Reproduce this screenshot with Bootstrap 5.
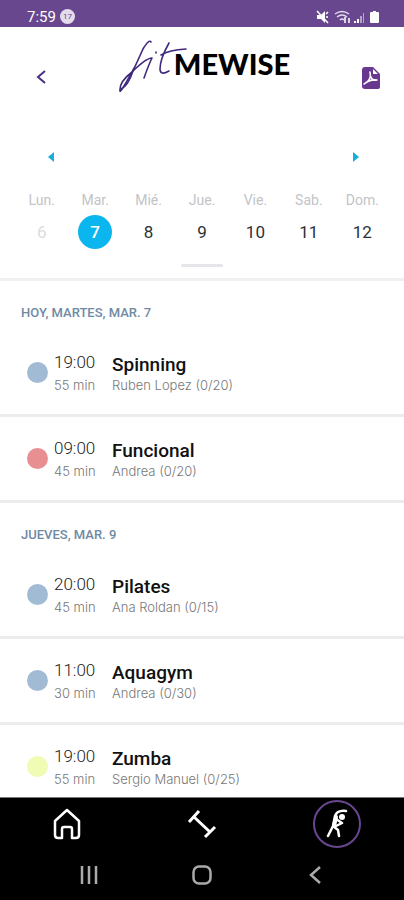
<!DOCTYPE html>
<html lang="es">
<head>
<meta charset="utf-8">
<meta name="viewport" content="width=device-width, initial-scale=1">
<title>Fitmewise</title>
<link href="https://cdn.jsdelivr.net/npm/bootstrap@5.3.0/dist/css/bootstrap.min.css" rel="stylesheet">
<style>
  body { font-family: Roboto, "Open Sans", sans-serif; color: #111; background: #fff; }
  svg { display: block; }
  button { border: 0; background: none; padding: 0; color: inherit; }
  .status { background: #68478e; color: #fff; height: 27px; padding: 6px 24px 0 27px; font-size: 15px; line-height: 22px; }
  .notice { width: 15px; height: 15px; background: #e4dcec; color: #68478e; font-size: 8px; line-height: 15px; }
  .topbar { height: 103px; padding: 8px 22px 0 33px; }
  .topbar button { margin-top: 32px; }
  .brand-name { font-family: Lato, sans-serif; font-weight: 900; font-size: 29px; line-height: 28px; color: #000; padding-top: 15px; margin-left: -14px; }
  .week { padding: 16px 15px 0; border-bottom: 3px solid #f0f0f2; }
  .arrows { padding: 0 28px 0 31px; height: 22px; }
  .days { display: grid; grid-template-columns: repeat(7, 1fr); padding-top: 22px; }
  .dow { font-size: 14px; line-height: 20px; color: #c2c4c8; }
  .num { width: 34px; height: 34px; font-size: 17px; line-height: 34px; margin-top: 5px; color: #2d3237; }
  .num.past { color: #d9dce0; }
  .num.today { background: #0bb5ee; color: #fff; font-weight: 500; }
  .grip { width: 42px; height: 3px; background: #e4e6ea; margin: 15px auto 11px; }
  .agenda { min-height: 0; }
  .agenda h2 { font-size: 13px; font-weight: 500; line-height: 20px; color: #6f8aa4; margin: 0; padding: 22px 21px 8px; }
  .session { height: 86px; padding: 19px 20px 0 27px; border-bottom: 3px solid #ececee; }
  .dot { width: 21px; height: 21px; margin: 12px 6px 0 0; flex: none; }
  .blue { background: #a2bbd5; }
  .red { background: #e88f91; }
  .lime { background: #f0fbb4; }
  .when { width: 58px; flex: none; }
  .when time { font-size: 17px; line-height: 24px; font-weight: 300; color: #222; }
  .detail { font-family: Inter, sans-serif; font-weight: 300; font-size: 13px; line-height: 23px; color: #777; }
  .session h3 { font-size: 19px; font-weight: 500; line-height: 24px; padding-top: 3px; margin: 0; color: #111; }
  .session .who { line-height: 17px; }
  .tabs { background: #000; border-top: 1px solid #777; height: 53px; }
  .ring { width: 48px; height: 48px; border: 2px solid #68478e; }
  .sysnav { background: #000; height: 50px; padding: 0 33px; }
  .sysnav > * { flex: 1; }
</style>
</head>
<body>
<div class="vh-100 d-flex flex-column overflow-hidden">
  <div class="status d-flex justify-content-between flex-shrink-0">
    <div class="d-flex align-items-center gap-1"><span>7:59</span><span class="notice rounded-circle text-center">17</span></div>
    <svg width="64" height="22" viewBox="0 0 64 22" fill="#fff" aria-hidden="true">
      <path d="M1 9h4l4-4v12l-4-4H1z"/><path d="M1 5l11 12M10 8l2-2M10 11h2" stroke="#fff" stroke-width="1.5"/>
      <path d="M19 8q7-5 14 0M21 11q5-4 10 0M24 14q2-2 4 0" fill="none" stroke="#e4dcec" stroke-width="1.5"/><path d="M29 11v6M33 17v-5" stroke="#fff" stroke-width="1.5"/>
      <path d="M38 15h2v2h-2zM41 13h2v4h-2z"/><path d="M44 10h2v7h-2zM47 7h1v10h-1z" opacity=".5"/>
      <path d="M54 7q0-1 1-1h2V5h3v1h2q1 0 1 1v9q0 1-1 1h-7q-1 0-1-1z"/>
    </svg>
  </div>

  <header class="topbar d-flex justify-content-between align-items-start flex-shrink-0">
    <button type="button" aria-label="Volver"><svg width="16" height="20" viewBox="0 0 16 20" fill="none" stroke="#4a2f86" stroke-width="2"><path d="M12 4l-7 6 7 6"/></svg></button>
    <div class="d-flex align-items-start" role="img" aria-label="fitmewise">
      <svg width="69" height="60" viewBox="0 0 69 60" fill="none" stroke="#40297c" stroke-width="1.6" stroke-linecap="round" stroke-linejoin="round">
        <path d="M32 7Q30 4 24 14Q17 31 8 46Q1 58 1 56Q0 47 13 37Q27 23 33 23Q30 29 25 43"/>
        <path d="M2 54Q9 51 14 36M37 17v1"/>
        <path d="M50 8Q41 24 41 34Q41 41 50 36M42 20Q50 15 67 14"/>
      </svg>
      <span class="brand-name">MEWISE</span>
    </div>
    <button type="button" aria-label="Descargar PDF"><svg width="22" height="24" viewBox="0 0 22 24"><path d="M5 0h8l7 7v13q0 2-2 2H5q-3 0-3-3V3q0-3 3-3z" fill="#68388f"/><path d="M13 2v5h5" fill="#fff"/><path d="M4 17q8-4 6-12 0 9 7 8-7-1-13 4z" fill="none" stroke="#fff" stroke-width="1.6" stroke-linejoin="round"/></svg></button>
  </header>

  <section class="week flex-shrink-0">
    <div class="arrows d-flex justify-content-between align-items-center">
      <button type="button" aria-label="Semana anterior"><svg width="10" height="12" viewBox="0 0 10 12"><path d="M8 1v10L2 6z" fill="#14aedf"/></svg></button>
      <button type="button" aria-label="Semana siguiente"><svg width="10" height="12" viewBox="0 0 10 12"><path d="M2 1v10l6-5z" fill="#14aedf"/></svg></button>
    </div>
    <div class="days text-center">
      <div><div class="dow">Lun.</div><button type="button" class="num past rounded-circle">6</button></div>
      <div><div class="dow">Mar.</div><button type="button" class="num today rounded-circle" aria-current="date">7</button></div>
      <div><div class="dow">Mié.</div><button type="button" class="num rounded-circle">8</button></div>
      <div><div class="dow">Jue.</div><button type="button" class="num rounded-circle">9</button></div>
      <div><div class="dow">Vie.</div><button type="button" class="num rounded-circle">10</button></div>
      <div><div class="dow">Sab.</div><button type="button" class="num rounded-circle">11</button></div>
      <div><div class="dow">Dom.</div><button type="button" class="num rounded-circle">12</button></div>
    </div>
    <div class="grip rounded"></div>
  </section>

  <main class="agenda flex-fill overflow-hidden">
    <h2>HOY, MARTES, MAR. 7</h2>
    <article class="session d-flex"><span class="dot blue rounded-circle"></span><div class="when"><time class="d-block">19:00</time><div class="detail">55 min</div></div><div><h3>Spinning</h3><div class="detail who">Ruben Lopez (0/20)</div></div></article>
    <article class="session d-flex"><span class="dot red rounded-circle"></span><div class="when"><time class="d-block">09:00</time><div class="detail">45 min</div></div><div><h3>Funcional</h3><div class="detail who">Andrea (0/20)</div></div></article>
    <h2>JUEVES, MAR. 9</h2>
    <article class="session d-flex"><span class="dot blue rounded-circle"></span><div class="when"><time class="d-block">20:00</time><div class="detail">45 min</div></div><div><h3>Pilates</h3><div class="detail who">Ana Roldan (0/15)</div></div></article>
    <article class="session d-flex"><span class="dot blue rounded-circle"></span><div class="when"><time class="d-block">11:00</time><div class="detail">30 min</div></div><div><h3>Aquagym</h3><div class="detail who">Andrea (0/30)</div></div></article>
    <article class="session d-flex"><span class="dot lime rounded-circle"></span><div class="when"><time class="d-block">19:00</time><div class="detail">55 min</div></div><div><h3>Zumba</h3><div class="detail who">Sergio Manuel (0/25)</div></div></article>
  </main>

  <nav class="tabs row g-0 flex-shrink-0 align-items-center" aria-label="Principal">
    <a class="col d-flex justify-content-center" href="#inicio" aria-label="Inicio"><svg width="28" height="32" viewBox="0 0 28 32" fill="none" stroke="#fff" stroke-width="2.5" stroke-linejoin="round"><path d="M14 2L2 13v14q0 3 3 3h4V21q0-2 2-2h6q2 0 2 2v9h4q3 0 3-3V13z"/></svg></a>
    <a class="col d-flex justify-content-center" href="#entreno" aria-label="Entrenamiento"><svg width="30" height="30" viewBox="0 0 30 30" fill="none" stroke="#fff" stroke-width="3"><path d="M2 13L12 2M18 28L28 18M7 8l16 15"/></svg></a>
    <a class="col d-flex justify-content-center" href="#clases" aria-label="Clases"><span class="ring rounded-circle d-flex align-items-center justify-content-center"><svg width="24" height="30" viewBox="0 0 24 30" fill="none" stroke="#fff" stroke-width="2.5" stroke-linecap="round" stroke-linejoin="round"><path d="M21 2Q12 1 10 7L8 17 3 27M8 17l5 4 1 6M11 10l6 4-6 3"/><path d="M11 8L9 17" stroke-width="4"/><circle cx="17" cy="8" r="3" fill="#fff" stroke="none"/></svg></span></a>
  </nav>
  <div class="sysnav d-flex align-items-center flex-shrink-0">
    <button type="button" class="d-flex justify-content-center" aria-label="Recientes"><svg width="20" height="20" viewBox="0 0 20 20" stroke="#aaa" stroke-width="2.5"><path d="M3 1v18M10 1v18M17 1v18"/></svg></button>
    <button type="button" class="d-flex justify-content-center" aria-label="Inicio del sistema"><svg width="20" height="20" viewBox="0 0 20 20" fill="none" stroke="#aaa" stroke-width="2.5"><rect x="1.5" y="1.5" width="17" height="17" rx="5.5"/></svg></button>
    <button type="button" class="d-flex justify-content-center" aria-label="Atrás"><svg width="20" height="20" viewBox="0 0 20 20" fill="none" stroke="#aaa" stroke-width="2.5"><path d="M15 2L6 10l9 8"/></svg></button>
  </div>
</div>
<script src="https://cdn.jsdelivr.net/npm/bootstrap@5.3.0/dist/js/bootstrap.bundle.min.js"></script>
</body>
</html>
